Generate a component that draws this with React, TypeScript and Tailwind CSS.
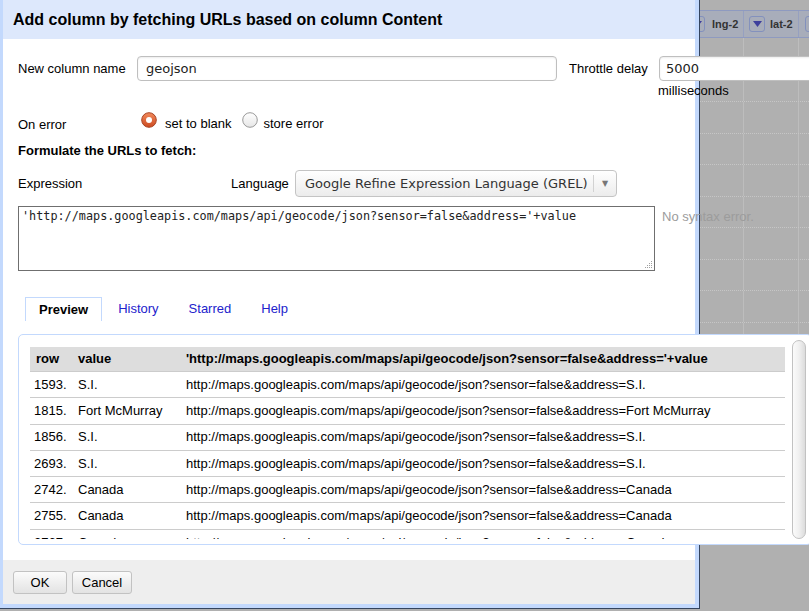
import React from 'react';

const base = 'http://maps.googleapis.com/maps/api/geocode/json?sensor=false&address=';

const rows = [
  ['1593.', 'S.I.'],
  ['1815.', 'Fort McMurray'],
  ['1856.', 'S.I.'],
  ['2693.', 'S.I.'],
  ['2742.', 'Canada'],
  ['2755.', 'Canada'],
  ['2767.', 'Canada'],
  ['2790.', 'Canada'],
];

const DropButton = () => (
  <div className="w-[16px] h-[16px] shrink-0 rounded-[3px] border border-[#8391bd] flex items-center justify-center">
    <svg width="9" height="6" viewBox="0 0 9 6">
      <path d="M0 0h9L4.5 6z" fill="#3d3f9c" />
    </svg>
  </div>
);

const Radio = ({ checked }: { checked?: boolean }) => (
  <svg width="16" height="16" viewBox="0 0 16 16" className="shrink-0">
    <defs>
      <linearGradient id="rOn" x1="0" y1="0" x2="0" y2="1">
        <stop offset="0" stopColor="#f28a5c" />
        <stop offset="1" stopColor="#cc4a20" />
      </linearGradient>
      <linearGradient id="rOff" x1="0" y1="0" x2="0" y2="1">
        <stop offset="0" stopColor="#ffffff" />
        <stop offset="1" stopColor="#e6e6e6" />
      </linearGradient>
    </defs>
    {checked ? (
      <>
        <circle cx="8" cy="8" r="7.3" fill="url(#rOn)" stroke="#a84424" strokeWidth="1" />
        <circle cx="8" cy="8" r="3" fill="#ffffff" />
      </>
    ) : (
      <circle cx="8" cy="8" r="7.3" fill="url(#rOff)" stroke="#9a9a9a" strokeWidth="1" />
    )}
  </svg>
);

export default function App() {
  return (
    <div className="relative w-[809px] h-[611px] overflow-hidden bg-[#b0b0b0] font-['Liberation_Sans',Arial,sans-serif] text-[13px] text-black">
      {/* grid behind the dialog */}
      <div className="pt-[10px]">
        <div className="flex h-[28px] bg-[#a8adba] border-t border-b border-[#8e9ac0] pl-[684px]">
          <div className="w-[60px] shrink-0 flex items-center gap-[7px] pl-[5px] border-r border-[#96a0c0]">
            <DropButton />
            <span className="font-bold text-[11px] text-[#333]">lng-2</span>
          </div>
          <div className="w-[55px] shrink-0 flex items-center gap-[5px] pl-[5px] border-r border-[#96a0c0]">
            <DropButton />
            <span className="font-bold text-[11px] text-[#333]">lat-2</span>
          </div>
          <div className="w-[60px] shrink-0 flex items-center pl-[6px]">
            <DropButton />
          </div>
        </div>
        {[64, 31.5, 31.5, 31.5, 31.5, 31.5, 31.5, 31.5, 31.5].map((h, i) => (
          <div key={i} className="flex pl-[684px] border-b border-dotted border-[#c6c6c6]" style={{ height: h }}>
            <div className="w-[60px] shrink-0 border-r border-[#bdbdbd]" />
            <div className="w-[55px] shrink-0 border-r border-[#bdbdbd]" />
          </div>
        ))}
      </div>

      {/* dialog */}
      <div className="absolute left-[-1px] top-[-4px] w-[700px] h-[612px] border-4 border-[#c3d9fd] shadow-[1px_1px_0_0_#34445e] flex flex-col">
        <div className="h-[39px] shrink-0 bg-[#dde8fc] flex items-center pl-[10px] text-[16px] font-bold">
          Add column by fetching URLs based on column Content
        </div>

        <div className="flex-1 bg-white px-[15px]">
          <div className="flex items-start mt-[17px]">
            <div className="w-[119px] h-[25px] shrink-0 flex items-center">New column name</div>
            <input
              readOnly
              value="geojson"
              className="w-[420px] h-[25px] shrink-0 bg-white border border-[#bfbfbf] rounded-[4px] pl-[8px] font-['DejaVu_Sans',sans-serif] text-[13px] text-[#222] shadow-[inset_0_1px_2px_rgba(0,0,0,0.08)] outline-none"
            />
            <div className="w-[90px] ml-[12px] h-[25px] shrink-0 flex items-center">Throttle delay</div>
            <div className="flex flex-col shrink-0">
              <input
                readOnly
                value="5000"
                className="w-[170px] h-[25px] bg-white border border-[#bfbfbf] rounded-[4px] pl-[6px] font-['DejaVu_Sans',sans-serif] text-[13px] text-[#222] shadow-[inset_0_1px_2px_rgba(0,0,0,0.08)] outline-none"
              />
              <span className="-ml-px mt-[2px] leading-[16px]">milliseconds</span>
            </div>
          </div>

          <div className="flex items-start mt-[13px]">
            <span className="w-[123px] shrink-0 mt-[5px] leading-[16px]">On error</span>
            <Radio checked />
            <span className="ml-[8px] mt-[4px] leading-[16px]">set to blank</span>
            <div className="ml-[10px]">
              <Radio />
            </div>
            <span className="ml-[6px] mt-[4px] leading-[16px]">store error</span>
          </div>

          <div className="mt-[10px] font-bold leading-[16px]">Formulate the URLs to fetch:</div>

          <div className="flex items-center h-[27px] mt-[11px]">
            <span className="w-[213px] shrink-0">Expression</span>
            <span className="w-[64px] shrink-0">Language</span>
            <div className="w-[322px] h-[27px] shrink-0 rounded-[4px] border border-[#c4c4c4] bg-gradient-to-b from-white to-[#ececec] flex items-center pl-[9px] font-['DejaVu_Sans',sans-serif] text-[13px] text-[#333]">
              <span className="flex-1">Google Refine Expression Language (GREL)</span>
              <span className="w-px h-[17px] bg-[#d2d2d2]" />
              <span className="w-[22px] text-center text-[8px] text-[#777]">▼</span>
            </div>
          </div>

          <div className="flex items-start mt-[9px]">
            <div className="relative w-[637px] h-[65px] shrink-0 border border-[#6f6f6f] pl-[3px] pt-[2px] font-['DejaVu_Sans_Mono',monospace] text-[11.8px] leading-[14px] text-[#222]">
              'http://maps.googleapis.com/maps/api/geocode/json?sensor=false&amp;address='+value
              <svg width="9" height="9" viewBox="0 0 9 9" className="absolute right-[1px] bottom-[1px]">
                <g fill="#a0a0a0">
                  <rect x="7" y="1" width="1" height="1" />
                  <rect x="5" y="3" width="1" height="1" />
                  <rect x="7" y="3" width="1" height="1" />
                  <rect x="3" y="5" width="1" height="1" />
                  <rect x="5" y="5" width="1" height="1" />
                  <rect x="7" y="5" width="1" height="1" />
                  <rect x="1" y="7" width="1" height="1" />
                  <rect x="3" y="7" width="1" height="1" />
                  <rect x="5" y="7" width="1" height="1" />
                  <rect x="7" y="7" width="1" height="1" />
                </g>
              </svg>
            </div>
            <span className="ml-[7px] mt-[1px] text-[#9c9c9c] whitespace-nowrap">No syntax error.</span>
          </div>

          <div className="flex items-stretch h-[24px] mt-[26px] ml-[7px] gap-[2px]">
            <div className="px-[13px] flex items-center font-bold border border-b-0 border-[#c3d9fd] bg-white">Preview</div>
            <div className="px-[14px] flex items-center text-[#2222cc]">History</div>
            <div className="px-[14px] flex items-center text-[#2222cc]">Starred</div>
            <div className="px-[14px] flex items-center text-[#2222cc]">Help</div>
          </div>

          <div className="mt-[13px] w-[794px] h-[211px] bg-white border border-[#c3d9fd] rounded-[5px] p-[5px]">
            <div className="flex h-full gap-[7px]">
              <div className="flex-1 overflow-hidden pl-[6px] pt-[7px]">
                <div className="w-[755px]">
                  <div className="flex items-center h-[25px] bg-[#dddddd] border-b border-[#cccccc] font-bold">
                    <span className="w-[42px] pl-[6px] shrink-0">row</span>
                    <span className="w-[108px] pl-[6px] shrink-0">value</span>
                    <span className="pl-[6px] whitespace-nowrap">'http://maps.googleapis.com/maps/api/geocode/json?sensor=false&amp;address='+value</span>
                  </div>
                  {rows.map(([n, v]) => (
                    <div key={n} className="flex items-center h-[26.3px] border-b border-[#cccccc]">
                      <span className="w-[42px] pl-[4px] shrink-0">{n}</span>
                      <span className="w-[108px] pl-[6px] shrink-0 whitespace-nowrap">{v}</span>
                      <span className="pl-[6px] whitespace-nowrap">{base + v}</span>
                    </div>
                  ))}
                </div>
              </div>
              <div className="w-[14px] shrink-0 h-full rounded-full border border-[#c2c2c2] bg-gradient-to-r from-[#fbfbfb] via-[#f0f0f0] to-[#dcdcdc]" />
            </div>
          </div>
        </div>

        <div className="h-[44px] shrink-0 bg-[#eeeeee] flex items-start gap-[5px] pl-[10px] pt-[11px]">
          <button className="w-[54px] h-[23px] rounded-[3px] border border-[#c2c2c2] bg-gradient-to-b from-[#fbfbfb] to-[#e3e3e3] text-[13px]">
            OK
          </button>
          <button className="w-[60px] h-[23px] rounded-[3px] border border-[#c2c2c2] bg-gradient-to-b from-[#fbfbfb] to-[#e3e3e3] text-[13px]">
            Cancel
          </button>
        </div>
      </div>
    </div>
  );
}
